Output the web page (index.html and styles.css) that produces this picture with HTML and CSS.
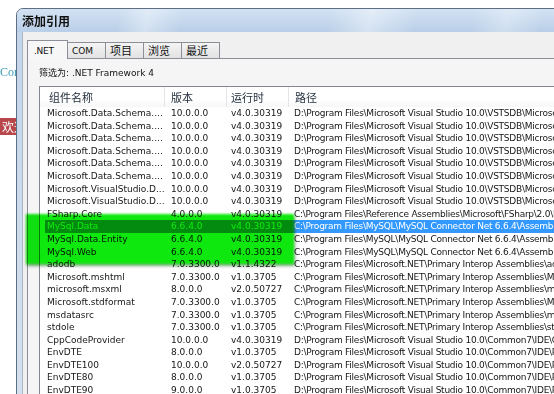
FILE: index.html
```html
<!DOCTYPE html>
<html>
<head>
<meta charset="utf-8">
<link rel="stylesheet" href="styles.css">
</head>
<body>
<div class="page">
  <div class="page-link">Cont</div>
  <div class="page-badge">欢迎</div>
</div>

<div class="window">
  <div class="titlebar">添加引用</div>
  <div class="frame">
    <div class="client">
      <div class="tabs">
        <div class="tab active">.NET</div>
        <div class="tab">COM</div>
        <div class="tab">项目</div>
        <div class="tab">浏览</div>
        <div class="tab">最近</div>
      </div>
      <div class="panel">
        <div class="filter">筛选为: .NET Framework 4</div>
        <div class="list">
          <div class="head">
            <div class="hcell">组件名称</div>
            <div class="hcell">版本</div>
            <div class="hcell">运行时</div>
            <div class="hcell">路径</div>
          </div>
          <div class="row"><div class="cell">Microsoft.Data.Schema....</div><div class="cell">10.0.0.0</div><div class="cell">v4.0.30319</div><div class="cell path">D:\Program Files\Microsoft Visual Studio 10.0\VSTSDB\Microsoft.Data.Schema.dll</div></div>
          <div class="row"><div class="cell">Microsoft.Data.Schema....</div><div class="cell">10.0.0.0</div><div class="cell">v4.0.30319</div><div class="cell path">D:\Program Files\Microsoft Visual Studio 10.0\VSTSDB\Microsoft.Data.Schema.Sql.dll</div></div>
          <div class="row"><div class="cell">Microsoft.Data.Schema....</div><div class="cell">10.0.0.0</div><div class="cell">v4.0.30319</div><div class="cell path">D:\Program Files\Microsoft Visual Studio 10.0\VSTSDB\Microsoft.Data.Schema.ScriptDom.dll</div></div>
          <div class="row"><div class="cell">Microsoft.Data.Schema....</div><div class="cell">10.0.0.0</div><div class="cell">v4.0.30319</div><div class="cell path">D:\Program Files\Microsoft Visual Studio 10.0\VSTSDB\Microsoft.Data.Schema.ScriptDom.Sql.dll</div></div>
          <div class="row"><div class="cell">Microsoft.Data.Schema....</div><div class="cell">10.0.0.0</div><div class="cell">v4.0.30319</div><div class="cell path">D:\Program Files\Microsoft Visual Studio 10.0\VSTSDB\Microsoft.Data.Schema.UnitTesting.dll</div></div>
          <div class="row"><div class="cell">Microsoft.Data.Schema....</div><div class="cell">10.0.0.0</div><div class="cell">v4.0.30319</div><div class="cell path">D:\Program Files\Microsoft Visual Studio 10.0\VSTSDB\Microsoft.Data.Schema.Utilities.dll</div></div>
          <div class="row"><div class="cell">Microsoft.VisualStudio.D...</div><div class="cell">10.0.0.0</div><div class="cell">v4.0.30319</div><div class="cell path">D:\Program Files\Microsoft Visual Studio 10.0\VSTSDB\Microsoft.VisualStudio.Data.dll</div></div>
          <div class="row"><div class="cell">Microsoft.VisualStudio.D...</div><div class="cell">10.0.0.0</div><div class="cell">v4.0.30319</div><div class="cell path">D:\Program Files\Microsoft Visual Studio 10.0\VSTSDB\Microsoft.VisualStudio.Data.Schema.dll</div></div>
          <div class="row"><div class="cell">FSharp.Core</div><div class="cell">4.0.0.0</div><div class="cell">v4.0.30319</div><div class="cell path">C:\Program Files\Reference Assemblies\Microsoft\FSharp\2.0\Runtime\v4.0\FSharp.Core.dll</div></div>
          <div class="row selected"><div class="cell">MySql.Data</div><div class="cell">6.6.4.0</div><div class="cell">v4.0.30319</div><div class="cell path">C:\Program Files\MySQL\MySQL Connector Net 6.6.4\Assemblies\v4.0\MySql.Data.dll</div></div>
          <div class="row"><div class="cell">MySql.Data.Entity</div><div class="cell">6.6.4.0</div><div class="cell">v4.0.30319</div><div class="cell path">C:\Program Files\MySQL\MySQL Connector Net 6.6.4\Assemblies\v4.0\MySql.Data.Entity.dll</div></div>
          <div class="row"><div class="cell">MySql.Web</div><div class="cell">6.6.4.0</div><div class="cell">v4.0.30319</div><div class="cell path">C:\Program Files\MySQL\MySQL Connector Net 6.6.4\Assemblies\v4.0\MySql.Web.dll</div></div>
          <div class="row"><div class="cell">adodb</div><div class="cell">7.0.3300.0</div><div class="cell">v1.1.4322</div><div class="cell path">C:\Program Files\Microsoft.NET\Primary Interop Assemblies\adodb.dll</div></div>
          <div class="row"><div class="cell">Microsoft.mshtml</div><div class="cell">7.0.3300.0</div><div class="cell">v1.0.3705</div><div class="cell path">C:\Program Files\Microsoft.NET\Primary Interop Assemblies\Microsoft.mshtml.dll</div></div>
          <div class="row"><div class="cell">microsoft.msxml</div><div class="cell">8.0.0.0</div><div class="cell">v2.0.50727</div><div class="cell path">C:\Program Files\Microsoft.NET\Primary Interop Assemblies\microsoft.msxml.dll</div></div>
          <div class="row"><div class="cell">Microsoft.stdformat</div><div class="cell">7.0.3300.0</div><div class="cell">v1.0.3705</div><div class="cell path">C:\Program Files\Microsoft.NET\Primary Interop Assemblies\Microsoft.stdformat.dll</div></div>
          <div class="row"><div class="cell">msdatasrc</div><div class="cell">7.0.3300.0</div><div class="cell">v1.0.3705</div><div class="cell path">C:\Program Files\Microsoft.NET\Primary Interop Assemblies\msdatasrc.dll</div></div>
          <div class="row"><div class="cell">stdole</div><div class="cell">7.0.3300.0</div><div class="cell">v1.0.3705</div><div class="cell path">C:\Program Files\Microsoft.NET\Primary Interop Assemblies\stdole.dll</div></div>
          <div class="row"><div class="cell">CppCodeProvider</div><div class="cell">10.0.0.0</div><div class="cell">v4.0.30319</div><div class="cell path">D:\Program Files\Microsoft Visual Studio 10.0\Common7\IDE\CppCodeProvider.dll</div></div>
          <div class="row"><div class="cell">EnvDTE</div><div class="cell">8.0.0.0</div><div class="cell">v1.0.3705</div><div class="cell path">D:\Program Files\Microsoft Visual Studio 10.0\Common7\IDE\PublicAssemblies\EnvDTE.dll</div></div>
          <div class="row"><div class="cell">EnvDTE100</div><div class="cell">10.0.0.0</div><div class="cell">v2.0.50727</div><div class="cell path">D:\Program Files\Microsoft Visual Studio 10.0\Common7\IDE\PublicAssemblies\EnvDTE100.dll</div></div>
          <div class="row"><div class="cell">EnvDTE80</div><div class="cell">8.0.0.0</div><div class="cell">v1.0.3705</div><div class="cell path">D:\Program Files\Microsoft Visual Studio 10.0\Common7\IDE\PublicAssemblies\EnvDTE80.dll</div></div>
          <div class="row"><div class="cell">EnvDTE90</div><div class="cell">9.0.0.0</div><div class="cell">v1.0.3705</div><div class="cell path">D:\Program Files\Microsoft Visual Studio 10.0\Common7\IDE\PublicAssemblies\EnvDTE90.dll</div></div>
        </div>
      </div>
    </div>
  </div>
</div>

<div class="marker"></div>
</body>
</html>
```

FILE: styles.css
```css
html, body {
  margin: 0;
  padding: 0;
  overflow: hidden;
}

body {
  width: 554px;
  height: 394px;
  position: relative;
  background: #ffffff;
  font-family: "DejaVu Sans", "Noto Sans CJK SC", sans-serif;
}

/* page behind the dialog */
.page {
  display: flex;
  flex-direction: column;
  align-items: flex-start;
  padding-top: 65px;
  width: 16px;
  overflow: hidden;
}

.page-link {
  font-family: "Liberation Serif", serif;
  font-size: 12px;
  line-height: 14px;
  color: #3d9bb4;
  white-space: nowrap;
  width: 16px;
  overflow: hidden;
}

.page-badge {
  margin-top: 39px;
  background: #b8474c;
  color: #ffffff;
  font-family: "Noto Sans CJK SC", sans-serif;
  font-size: 12px;
  line-height: 17px;
  padding-left: 2px;
  width: 14px;
  overflow: hidden;
  white-space: nowrap;
}

/* dialog window */
.window {
  position: absolute;
  left: 16px;
  top: 8px;
  width: 570px;
  height: 410px;
  box-sizing: border-box;
  border: 1px solid #5e6f84;
  border-top-left-radius: 7px;
  background: #cfdcec;
  display: flex;
  flex-direction: column;
  overflow: hidden;
}

.titlebar {
  height: 23px;
  flex: none;
  padding-left: 5px;
  font-family: "Noto Sans CJK SC", sans-serif;
  font-weight: bold;
  font-size: 12px;
  line-height: 23px;
  color: #111;
  background:
    linear-gradient(100deg, rgba(255,255,255,0) 18%, rgba(255,255,255,0.35) 23%, rgba(255,255,255,0) 29%,
      rgba(255,255,255,0) 55%, rgba(255,255,255,0.4) 62%, rgba(255,255,255,0) 70%,
      rgba(255,255,255,0) 80%, rgba(255,255,255,0.3) 86%, rgba(255,255,255,0) 92%),
    linear-gradient(#d3e2f3, #b9cfe8);
}

.frame {
  flex: 1;
  display: flex;
  padding-left: 5px;
  background: linear-gradient(#c3d5eb, #d6e1ee);
}

.client {
  flex: 1;
  border-left: 1px solid #a8b6c6;
  background: #f0f0f0;
  padding: 8px 0 0 4px;
  display: flex;
  flex-direction: column;
}

/* tabs */
.tabs {
  display: flex;
  align-items: flex-end;
  position: relative;
  z-index: 1;
  margin-bottom: -1px;
}

.tab {
  box-sizing: border-box;
  height: 16px;
  width: 38px;
  margin-bottom: 1px;
  padding-left: 4px;
  border: 1px solid #8c8f97;
  border-bottom: none;
  border-left: none;
  background: linear-gradient(#f4f4f4, #e2e2e2);
  font-size: 9px;
  line-height: 16px;
  color: #111;
  white-space: nowrap;
}

.tab:nth-child(n+3) {
  font-family: "Noto Sans CJK SC", sans-serif;
  font-size: 11px;
  line-height: 15px;
}

.tab.active {
  height: 19px;
  width: 41px;
  margin-bottom: 0;
  padding-left: 6px;
  border-left: 1px solid #8c8f97;
  background: #f7f7f7;
  line-height: 20px;
  letter-spacing: -0.3px;
}

.panel {
  flex: 1;
  border: 1px solid #8c8f97;
  background: #f5f5f5;
  padding: 7px 0 0 11px;
  display: flex;
  flex-direction: column;
}

.filter {
  font-family: "DejaVu Sans", "Noto Sans CJK SC", sans-serif;
  font-size: 9px;
  line-height: 14px;
  color: #111;
  white-space: nowrap;
}

/* list view */
.list {
  margin-top: 6px;
  flex: 1;
  border: 1px solid #828790;
  background: #ffffff;
  overflow: hidden;
}

.head {
  display: grid;
  grid-template-columns: 125px 62px 62px 1fr;
  height: 20px;
  background: linear-gradient(#ffffff 60%, #f6f7f9);
  font-family: "Noto Sans CJK SC", sans-serif;
  font-size: 11px;
  line-height: 20px;
  color: #1e2a38;
}

.hcell {
  padding-left: 6px;
  border-right: 1px solid #e3e5e8;
  white-space: nowrap;
}

.hcell:nth-child(1) { padding-left: 9px; }
.hcell:nth-child(3) { padding-left: 4px; }
.hcell:nth-child(4) { border-right: none; }

.row {
  display: grid;
  grid-template-columns: 124px 60px 63px 1fr;
  margin-left: 5px;
  height: 12.6px;
  font-size: 9px;
  line-height: 12.6px;
  color: #161616;
  white-space: nowrap;
}

.cell {
  padding-left: 2px;
  overflow: hidden;
}

.cell.path {
  letter-spacing: -0.25px;
}

.row.selected {
  background: #3399ff;
  color: #ffffff;
}

/* green highlighter overlay */
.marker {
  position: absolute;
  left: 26px;
  top: 214px;
  width: 268px;
  height: 50px;
  background: #0fe80f;
  mix-blend-mode: multiply;
  filter: blur(1px);
  box-shadow: 1px 2px 2px rgba(0, 90, 0, 0.55);
}
```
